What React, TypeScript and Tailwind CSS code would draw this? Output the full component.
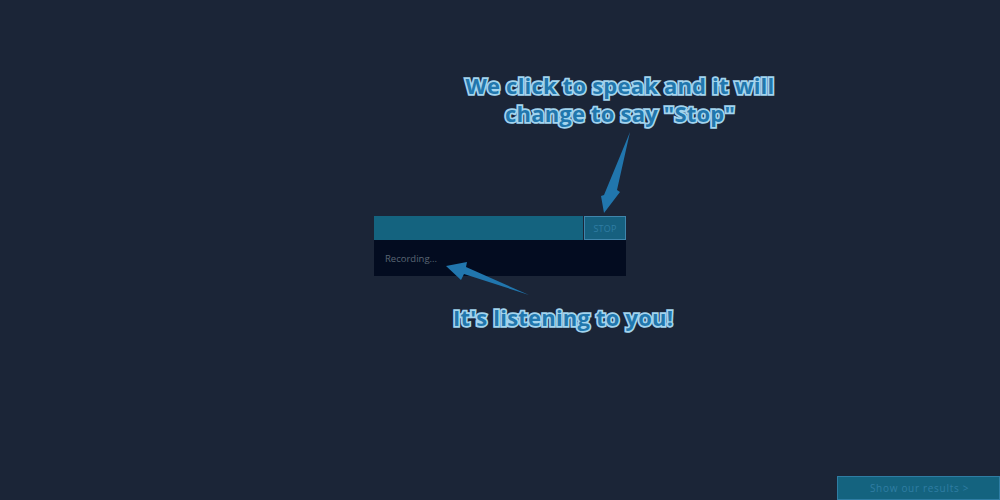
import React from 'react';

const labelClass =
  "absolute text-center font-['Open_Sans',sans-serif] font-bold text-[22px] leading-[28px] tracking-[0.2px] text-[#2177ad] [-webkit-text-stroke:3.5px_#a3d4ee] [paint-order:stroke_fill] whitespace-nowrap";

const App: React.FC = () => {
  return (
    <div className="relative w-[1000px] h-[500px] overflow-hidden bg-[#1b2537] font-['Open_Sans',sans-serif]">
      {/* Speech widget */}
      <div className="flex justify-center pt-[216px]">
        <div className="w-[252px]">
          <div className="flex h-6 bg-[#14637f]">
            <div className="flex-1 border-r border-[#1b2537]" />
            <button className="w-[42px] border border-[#3f85ab] bg-[#16607f] text-[9px] leading-none text-[#2f7da3] tracking-wide">
              STOP
            </button>
          </div>
          <div className="h-9 bg-[#030c20] px-[11px] pt-[11px] text-[9.5px] leading-[15px] font-normal text-[#5a6674]">
            Recording...
          </div>
        </div>
      </div>

      {/* Annotations */}
      <div className={`${labelClass} left-[465px] top-[71px] w-[310px]`}>
        We click to speak and it will
        <br />
        change to say "Stop"
      </div>
      <div className={`${labelClass} left-[453px] top-[303px] w-[220px]`}>It's listening to you!</div>

      <svg className="absolute left-0 top-0 pointer-events-none" width="1000" height="500" viewBox="0 0 1000 500">
        <path d="M630 132 L617 190 L620 192 L604 213 L601 196 L604 195 Z" fill="#2176ad" />
        <path d="M529 295 L464 274 L461 280 L446 266 L467 262 L466 267 Z" fill="#2176ad" />
      </svg>

      {/* Bottom right button */}
      <div className="absolute right-0 bottom-0 flex h-6 w-[163px] items-center justify-center border border-[#2f7da3] bg-[#14637f] pl-[2px] text-[10px] tracking-[0.07em] text-[#2f7da3]">
        Show our results &gt;
      </div>
    </div>
  );
};

export default App;
